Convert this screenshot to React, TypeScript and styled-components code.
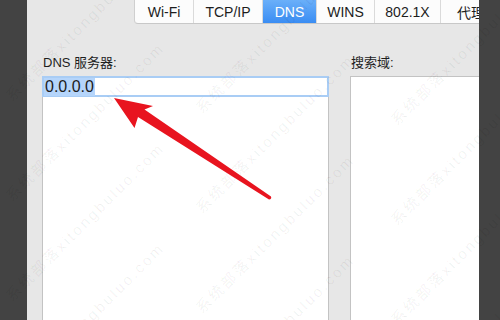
import styled, { createGlobalStyle } from 'styled-components';

const GlobalStyle = createGlobalStyle`
  html, body {
    margin: 0;
    padding: 0;
    background: #424242;
  }

  body {
    font-family: 'Liberation Sans', 'Noto Sans CJK SC', sans-serif;
  }
`;

const Screen = styled.div`
  position: relative;
  display: flex;

  width: 500px;
  height: 320px;

  overflow: hidden;
`;

const Strip = styled.div<{ $width: number }>`
  flex: 0 0 ${({ $width }) => $width}px;
  background-color: #434343;
`;

const Panel = styled.div`
  display: flex;
  flex-direction: column;
  flex: 1;

  min-width: 0;

  background-color: #e7e7e7;
  overflow: hidden;
`;

const TabBar = styled.nav`
  display: flex;
  flex-shrink: 0;

  height: 24px;
  margin-left: 107px;

  background-color: #fcfcfc;
  border-left: 1px solid #cfcfcf;
  border-bottom: 1px solid #c8c8c8;
  border-bottom-left-radius: 4px;
  box-sizing: border-box;
`;

const Tab = styled.div<{ $width: number; $active?: boolean }>`
  display: flex;
  justify-content: center;
  align-items: center;
  flex: 0 0 ${({ $width }) => $width}px;

  font-size: 14px;
  color: ${({ $active }) => ($active ? '#fff' : '#1d1d1d')};
  white-space: nowrap;

  background: ${({ $active }) => ($active ? 'linear-gradient(#6aaff9, #3a8df3)' : 'transparent')};
  border-right: 1px solid #dadada;
  box-sizing: border-box;

  &:last-child {
    border-right: none;
  }
`;

const Columns = styled.div`
  display: flex;
  gap: 21px;

  padding: 31px 0 0 15px;
`;

const Column = styled.div<{ $width: number }>`
  display: flex;
  flex-direction: column;
  flex: 0 0 ${({ $width }) => $width}px;
`;

const Label = styled.div`
  height: 16px;
  margin: 0 0 5px 1px;

  font-size: 13px;
  line-height: 16px;
  color: #1e1e1e;
`;

const ListBox = styled.div<{ $right?: boolean }>`
  height: 260px;

  background-color: #fff;
  border: 1px solid #c3c3c3;
  border-right: ${({ $right }) => ($right ? 'none' : '1px solid #c3c3c3')};
`;

const EditRow = styled.div`
  display: flex;
  align-items: center;

  height: 21px;
  margin: -1px -1px 0;
  padding: 0 2px;

  box-shadow: inset 0 0 0 2px #a9cdf5, inset 0 -2px 0 #90bdf0;
`;

const Selected = styled.span`
  padding: 0 1px;

  font-size: 16px;
  line-height: 18px;
  color: #1c1c1c;

  background-color: #b5d5fb;
`;

const Watermark = styled.span<{ $x: number; $y: number }>`
  position: absolute;
  left: ${({ $x }) => $x}px;
  top: ${({ $y }) => $y - 18}px;

  font-size: 15px;
  line-height: 18px;
  letter-spacing: 2.5px;
  color: rgba(0, 0, 0, 0.06);
  white-space: nowrap;

  transform: rotate(-45deg);
  transform-origin: 0 100%;
  pointer-events: none;
`;

const ArrowLayer = styled.svg`
  position: absolute;
  top: 0;
  left: 0;
`;

const tabs = [
  { label: 'Wi-Fi', width: 59 },
  { label: 'TCP/IP', width: 69 },
  { label: 'DNS', width: 54, active: true },
  { label: 'WINS', width: 58 },
  { label: '802.1X', width: 66 },
  { label: '代理', width: 60 },
];

// tiled watermark from the source site, one line per column/row
const marks = [15, 205, 400].flatMap((x, col) =>
  [105, 205, 305, 405].map((y) => ({ x, y: y + col * 12 })),
);

const App = () => {
  return (
    <>
      <GlobalStyle />
      <Screen>
        <Strip $width={27} />
        <Panel>
          <TabBar>
            {tabs.map((tab) => (
              <Tab key={tab.label} $width={tab.width} $active={tab.active}>
                {tab.label}
              </Tab>
            ))}
          </TabBar>
          <Columns>
            <Column $width={287}>
              <Label>DNS 服务器:</Label>
              <ListBox>
                <EditRow>
                  <Selected>0.0.0.0</Selected>
                </EditRow>
              </ListBox>
            </Column>
            <Column $width={140}>
              <Label>搜索域:</Label>
              <ListBox $right />
            </Column>
          </Columns>
        </Panel>
        <Strip $width={21} />

        {marks.map((m) => (
          <Watermark key={`${m.x}-${m.y}`} $x={m.x} $y={m.y}>
            系统部落xitongbuluo.com
          </Watermark>
        ))}

        <ArrowLayer width="500" height="320" viewBox="0 0 500 320">
          <path
            d="M114 98 L153 106 L144.5 109.5 L271 196.5 Q272 199 269 199.5 L138 117 L134.5 128 Z"
            fill="#e8141f"
          />
        </ArrowLayer>
      </Screen>
    </>
  );
};

export default App;
